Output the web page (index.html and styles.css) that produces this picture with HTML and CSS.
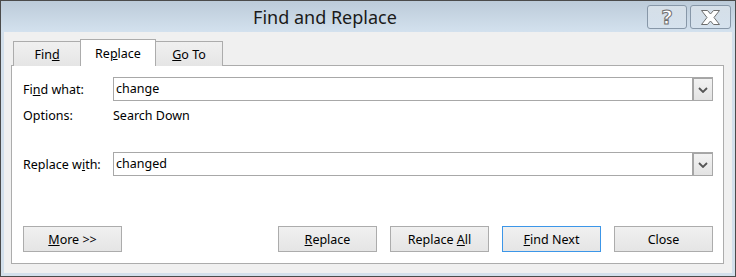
FILE: index.html
```html
<!DOCTYPE html>
<html lang="en">
<head>
    <meta charset="UTF-8">
    <title>Find and Replace</title>
    <link rel="stylesheet" href="styles.css">
</head>
<body>
    <div class="window">
        <div class="titlebar">
            <div class="title">Find and Replace</div>
            <div class="caption-buttons">
                <div class="caption-btn help"><span>?</span></div>
                <div class="caption-btn close">
                    <svg width="21" height="17" viewBox="0 0 21 17">
                        <path d="M1.5 1.5 H7.5 L10.5 5 L13.5 1.5 H19.5 L14 8.5 L19.5 15.5 H13.5 L10.5 12 L7.5 15.5 H1.5 L7 8.5 Z"
                              fill="#fff" stroke="#6e6e6e" stroke-width="1" stroke-linejoin="round"/>
                    </svg>
                </div>
            </div>
        </div>

        <div class="body">
            <div class="tabs">
                <div class="tab">Fin<u>d</u></div>
                <div class="tab active">Re<u>p</u>lace</div>
                <div class="tab"><u>G</u>o To</div>
            </div>

            <div class="panel">
                <div class="field-row">
                    <label>Fi<u>n</u>d what:</label>
                    <div class="combo">
                        <span class="combo-text">change</span>
                        <span class="combo-arrow">
                            <svg width="10" height="6" viewBox="0 0 10 6"><path d="M1 1 L5 5 L9 1" fill="none" stroke="#555" stroke-width="1.8"/></svg>
                        </span>
                    </div>
                </div>
                <div class="options-row">
                    <span class="label">Options:</span>
                    <span>Search Down</span>
                </div>
                <div class="field-row replace-row">
                    <label>Replace w<u>i</u>th:</label>
                    <div class="combo">
                        <span class="combo-text">changed</span>
                        <span class="combo-arrow">
                            <svg width="10" height="6" viewBox="0 0 10 6"><path d="M1 1 L5 5 L9 1" fill="none" stroke="#555" stroke-width="1.8"/></svg>
                        </span>
                    </div>
                </div>

                <div class="button-row">
                    <button class="btn"><u>M</u>ore &gt;&gt;</button>
                    <div class="spacer"></div>
                    <button class="btn"><u>R</u>eplace</button>
                    <button class="btn">Replace <u>A</u>ll</button>
                    <button class="btn default"><u>F</u>ind Next</button>
                    <button class="btn">Close</button>
                </div>
            </div>
        </div>
    </div>
</body>
</html>
```

FILE: styles.css
```css
* {
    margin: 0;
    padding: 0;
    box-sizing: border-box;
}

body {
    font-family: "Noto Sans", "Open Sans", sans-serif;
    font-size: 12.5px;
    color: #000;
    background: #fff;
}

.window {
    width: 736px;
    height: 277px;
    border: 1px solid #4b4b4b;
    background: #d3e0ec;
    display: flex;
    flex-direction: column;
    padding: 0 3px 3px 3px;
}

/* title bar */
.titlebar {
    height: 31px;
    margin: 0 -3px;
    display: flex;
    align-items: flex-start;
    background: linear-gradient(#bccbd9, #d3e1ee);
}

.title {
    flex: 1;
    text-align: center;
    font-size: 18px;
    line-height: 33px;
    color: #1a1a1a;
    padding-left: 2px;
}

.caption-buttons {
    display: flex;
    gap: 3px;
    padding: 4px 4px 0 0;
}

.caption-btn {
    height: 24px;
    border: 1px solid #8797a8;
    border-radius: 3px;
    background: linear-gradient(rgba(255, 255, 255, 0.35), rgba(255, 255, 255, 0.12));
    display: flex;
    align-items: center;
    justify-content: center;
}

.caption-btn.help {
    width: 40px;
}

.caption-btn.help span {
    font-family: "DejaVu Sans", sans-serif;
    font-weight: bold;
    font-size: 20px;
    line-height: 20px;
    color: #fff;
    -webkit-text-stroke: 1px #6e6e6e;
}

.caption-btn.close {
    width: 41px;
}

/* dialog body */
.body {
    flex: 1;
    background: #f0f0f0;
    padding: 8px 8px 8px 7px;
    display: flex;
    flex-direction: column;
}

.tabs {
    display: flex;
    align-items: flex-end;
    padding-left: 2px;
    height: 26px;
    position: relative;
    z-index: 1;
}

.tab {
    width: 68px;
    height: 25px;
    border: 1px solid #acacac;
    border-bottom: none;
    background: linear-gradient(#f0f0f0, #e5e5e5);
    text-align: center;
    line-height: 26px;
    margin-right: -1px;
}

.tab.active {
    width: 76px;
    height: 27px;
    background: #fff;
    line-height: 27px;
}

.panel {
    height: 199px;
    margin-top: -1px;
    border: 1px solid #acacac;
    background: #fff;
    padding: 11px 10px 11px 11px;
    display: flex;
    flex-direction: column;
}

.field-row {
    display: grid;
    grid-template-columns: 90px 1fr;
    align-items: center;
    height: 24px;
}

.field-row label {
    padding-top: 1px;
}

.replace-row {
    margin-top: 27px;
}

.options-row {
    display: grid;
    grid-template-columns: 90px 1fr;
    height: 18px;
    line-height: 18px;
    margin-top: 6px;
}

.combo {
    height: 24px;
    border: 1px solid #a8a8a8;
    display: flex;
    align-items: stretch;
}

.combo-text {
    flex: 1;
    padding-left: 2px;
    line-height: 22px;
}

.combo-arrow {
    width: 20px;
    border: 1px solid #a5a5a5;
    border-width: 1px 0 0 2px;
    background: linear-gradient(#f2f2f2, #e3e3e3);
    display: flex;
    align-items: center;
    justify-content: center;
}

.button-row {
    margin-top: auto;
    display: flex;
    gap: 13px;
}

.spacer {
    flex: 1;
}

.btn {
    width: 99px;
    height: 26px;
    border: 1px solid #acacac;
    background: linear-gradient(#f0f0f0, #e5e5e5);
    font-family: inherit;
    font-size: 12.5px;
    color: #000;
}

.btn.default {
    border-color: #3c96e8;
}
```
